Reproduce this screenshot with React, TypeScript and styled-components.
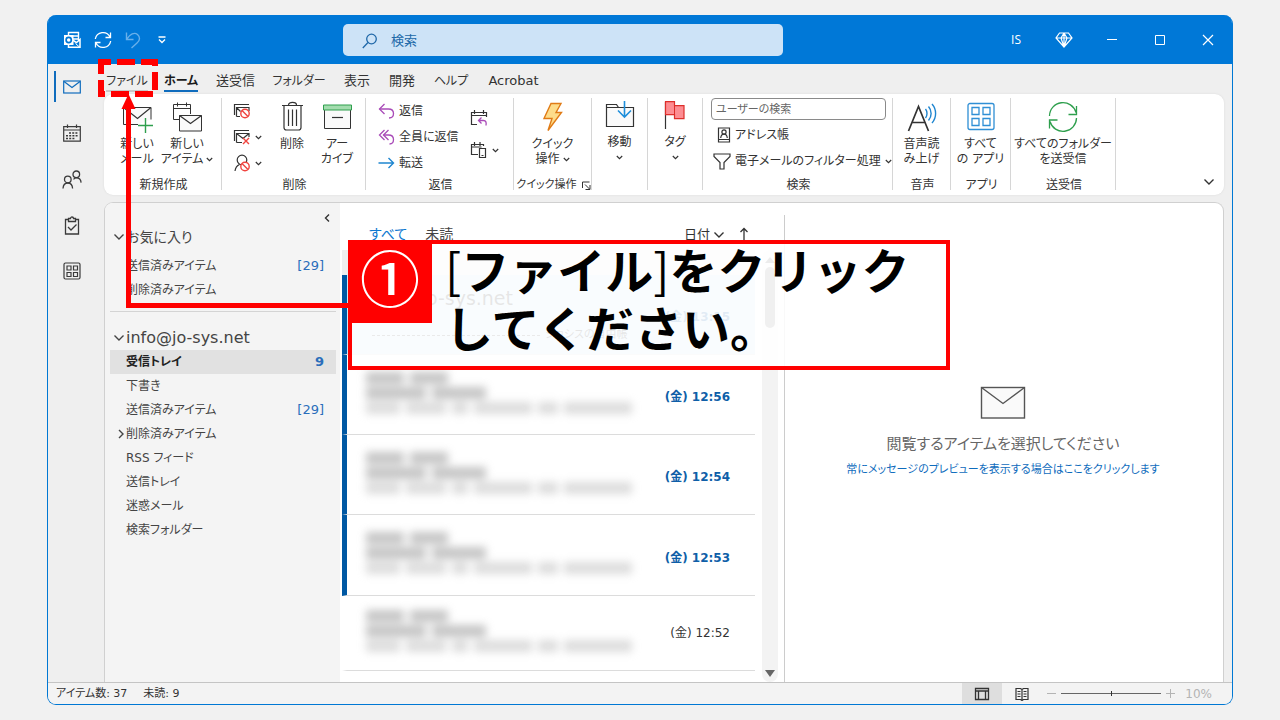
import React from "react";
import styled, { createGlobalStyle } from "styled-components";

const Global = createGlobalStyle`
  * { box-sizing: border-box; }
  body {
    margin: 0;
    background: #f1f1f1;
    color: #333;
    font-family: "DejaVu Sans", "Noto Sans CJK JP", sans-serif;
    font-feature-settings: "palt";
    font-size: 12px;
    line-height: 16px;
  }
  button, input { font: inherit; color: inherit; font-feature-settings: inherit; }
  button { background: none; border: 0; padding: 0; cursor: pointer; white-space: nowrap; }
  a { color: inherit; text-decoration: none; }
  ul { list-style: none; margin: 0; padding: 0; }
  h1, h2, p { margin: 0; font-weight: 400; }
  svg { display: block; flex: none; }
`;

const Page = styled.div`
  display: flex;
  min-height: 100vh;
  padding: 15px 47px;
`;
const Window = styled.div`
  position: relative;
  flex: 1;
  display: flex;
  flex-direction: column;
  border-radius: 9px;
  border: 1px solid #0078d4;
  border-top: 0;
  background: #efefef;
`;

/* Title bar */
const TitleBar = styled.header`
  display: grid;
  grid-template-columns: 295px 440px 1fr;
  align-items: center;
  height: 49px;
  background: #0078d7;
  color: #fff;
  border-radius: 8px 8px 0 0;
`;
const QuickAccess = styled.div`
  display: flex;
  align-items: center;
  gap: 13px;
  padding-left: 15px;
`;
const SearchField = styled.label`
  display: flex;
  align-items: center;
  gap: 13px;
  height: 32px;
  padding: 2px 20px 0 19px;
  border-radius: 5px;
  background: #cde3f7;
  color: #2068a8;
`;
const SearchInput = styled.input`
  flex: 1;
  min-width: 0;
  padding: 0;
  border: 0;
  outline: 0;
  background: none;
  font-size: 13px;
  &::placeholder { color: #2068a8; opacity: 1; }
`;
const WindowControls = styled.div`
  display: flex;
  justify-content: flex-end;
  align-items: center;
`;
const ControlButton = styled.button`
  display: flex;
  justify-content: center;
  align-items: center;
  width: 48px;
  height: 48px;
  font-family: "Open Sans", sans-serif;
`;

/* Body frame */
const Frame = styled.div`
  flex: 1;
  display: flex;
`;
const Rail = styled.nav`
  width: 56px;
  flex: none;
`;
const RailItem = styled.button<{ $active?: boolean }>`
  display: flex;
  align-items: center;
  justify-content: center;
  width: 48px;
  height: 46px;
  position: relative;
  color: ${(p) => (p.$active ? "#0f6cbd" : "#3a3a3a")};
  &::before {
    content: "";
    display: ${(p) => (p.$active ? "block" : "none")};
    position: absolute;
    left: 6px;
    top: 7px;
    width: 2px;
    height: 31px;
    background: #0f6cbd;
  }
`;
const Main = styled.div`
  flex: 1;
  min-width: 0;
  display: flex;
  flex-direction: column;
  padding-right: 8px;
`;
const Tabs = styled.nav`
  display: flex;
  height: 30px;
  margin-left: -5px;
`;
const Tab = styled.button<{ $width: number; $active?: boolean; $kana?: boolean }>`
  display: flex;
  justify-content: center;
  align-items: center;
  width: ${(p) => p.$width}px;
  flex: none;
  font-size: ${(p) => (p.$kana ? 12 : 13)}px;
  font-weight: ${(p) => (p.$active ? 700 : 400)};
  color: ${(p) => (p.$active ? "#1b1b1b" : "#333")};
`;
const TabText = styled.span<{ $line?: string }>`
  line-height: 18px;
  padding-top: 5px;
  border-bottom: 2px solid ${(p) => p.$line || "transparent"};
`;

/* Ribbon */
const Ribbon = styled.section`
  display: flex;
  height: 101px;
  padding: 4px 0 5px;
  background: #fff;
  border-radius: 9px;
  box-shadow: 0 0 2px #d8d8d8;
`;
const Group = styled.div<{ $width: number }>`
  display: flex;
  flex-direction: column;
  width: ${(p) => p.$width}px;
  flex: none;
  border-right: 1px solid #d6d6d6;
`;
const GroupBody = styled.div<{ $pad?: number; $gap?: number }>`
  flex: 1;
  display: flex;
  justify-content: ${(p) => (p.$pad ? "flex-start" : "center")};
  padding-left: ${(p) => p.$pad || 0}px;
  gap: ${(p) => p.$gap || 0}px;
`;
const GroupLabel = styled.div<{ $tight?: boolean }>`
  display: flex;
  justify-content: center;
  align-items: center;
  gap: 5px;
  height: 16px;
  margin-bottom: -3px;
  padding-left: 2px;
  font-size: ${(p) => (p.$tight ? 11 : 12)}px;
  white-space: nowrap;
`;
const BigButton = styled.button<{ $width: number }>`
  display: flex;
  flex-direction: column;
  align-items: center;
  width: ${(p) => p.$width}px;
  height: 70px;
  padding-top: 3px;
  line-height: 15px;
  & > svg { margin-bottom: 4px; }
`;
const BigLine = styled.span`
  display: flex;
  justify-content: center;
  align-items: center;
  gap: 3px;
  min-height: 15px;
`;
const Stack = styled.div<{ $gap?: number; $top?: number }>`
  display: flex;
  flex-direction: column;
  gap: ${(p) => p.$gap || 0}px;
  padding-top: ${(p) => p.$top || 0}px;
`;
const RowButton = styled.button<{ $indent?: number }>`
  display: flex;
  align-items: center;
  gap: 4px;
  height: 26px;
  padding-left: ${(p) => p.$indent || 0}px;
`;
const PeopleSearch = styled.input`
  width: 175px;
  height: 22px;
  margin-bottom: 2px;
  padding: 0 4px;
  border: 1px solid #8a8a8a;
  border-radius: 4px;
  background: #fff;
  font-size: 11px;
  &::placeholder { color: #666; opacity: 1; }
`;
const RibbonEnd = styled.div`
  flex: 1;
  display: flex;
  justify-content: flex-end;
  align-items: flex-end;
  padding: 0 9px 4px 0;
`;

/* Panes */
const Panes = styled.div`
  flex: 1;
  display: flex;
  margin-top: 7px;
  border: 1px solid #d0d0d0;
  border-bottom: 0;
  border-radius: 9px 9px 0 0;
  background: #fff;
  overflow: hidden;
`;
const FolderPane = styled.aside`
  width: 235px;
  flex: none;
  padding: 0 4px 0 5px;
  background: #f4f4f4;
`;
const CollapseRow = styled.div`
  display: flex;
  justify-content: flex-end;
  padding: 8px 5px 0 0;
  height: 22px;
`;
const FolderHeading = styled.h2<{ $size: number }>`
  display: flex;
  align-items: center;
  gap: 1px;
  height: 24px;
  padding-left: 3px;
  font-size: ${(p) => p.$size}px;
  color: #444;
`;
const FolderList = styled.ul``;
const Favorites = styled.div`
  padding-bottom: 9px;
  margin-bottom: 14px;
  border-bottom: 1px solid #d4d4d4;
  & ul { padding-top: 5px; }
`;
const FolderRow = styled.li<{ $active?: boolean }>`
  background: ${(p) => (p.$active ? "#e1e1e1" : "transparent")};
  font-weight: ${(p) => (p.$active ? 700 : 400)};
  color: ${(p) => (p.$active ? "#222" : "#444")};
`;
const FolderLink = styled.a`
  display: grid;
  grid-template-columns: 16px 1fr auto;
  align-items: center;
  height: 24px;
  padding-right: 12px;
  & > svg { justify-self: end; margin-right: 1px; }
`;
const Count = styled.span`
  grid-column: 3;
  font-size: 13px;
  color: #2a6ebb;
`;
const FolderName = styled.span`
  grid-column: 2;
`;

const ListPane = styled.section`
  display: grid;
  grid-template-columns: 413px 16px;
  grid-template-rows: 47px 1fr;
  column-gap: 7px;
  padding: 0 6px 0 2px;
  flex: none;
`;
const ListHeader = styled.div`
  grid-column: 1 / 3;
  display: flex;
  align-items: center;
  padding: 14px 29px 0 27px;
  font-size: 14px;
`;
const FilterButton = styled.button<{ $active?: boolean }>`
  margin-right: 18px;
  color: ${(p) => (p.$active ? "#0f78d0" : "#444")};
`;
const SortButton = styled.button`
  display: flex;
  align-items: center;
  gap: 3px;
  height: 20px;
  padding-top: 3px;
  margin-left: auto;
  font-size: 13px;
`;
const OrderButton = styled.button`
  margin-left: 14px;
`;
const GroupStrip = styled.div`
  height: 25px;
  background: #efefef;
`;
const MessageList = styled.ul``;
const Message = styled.li<{ $unread?: boolean; $selected?: boolean; $height: number }>`
  display: flex;
  justify-content: space-between;
  align-items: center;
  height: ${(p) => p.$height}px;
  padding: 0 25px 0 19px;
  border-left: 5px solid ${(p) => (p.$unread ? "#0058a3" : "transparent")};
  border-bottom: 1px solid #dcdcdc;
  background: ${(p) => (p.$selected ? "#cde6f7" : "transparent")};
`;
const MessageTime = styled.time<{ $unread?: boolean }>`
  padding-top: ${(p) => (p.$unread ? 5 : 0)}px;
  color: ${(p) => (p.$unread ? "#0f5fa8" : "#333")};
  font-weight: ${(p) => (p.$unread ? 700 : 400)};
`;
const SelectedText = styled.div`
  flex: 1;
  color: #333;
`;
const Sender = styled.div`
  font-size: 19px;
  line-height: 24px;
`;
const Subject = styled.div`
  display: flex;
  gap: 5px;
  align-items: center;
  padding: 17px 0 0 6px;
  font-size: 11px;
`;
const SubjectDash = styled.span`
  width: 168px;
  border-top: 1px dashed #555;
`;
const Masked = styled.div`
  display: flex;
  flex-direction: column;
  gap: 3px;
  padding-bottom: 4px;
  filter: blur(4px);
  opacity: 0.5;
`;
const MaskedLine = styled.div`
  display: flex;
  gap: 6px;
`;
const MaskedWord = styled.span<{ $width: number; $light?: boolean }>`
  width: ${(p) => p.$width}px;
  height: 12px;
  background: ${(p) => (p.$light ? "#bbb" : "#8c8c8c")};
`;
const ScrollTrack = styled.div`
  display: flex;
  flex-direction: column;
  align-items: center;
  padding: 7px 0 5px;
  border-radius: 8px;
  background: #f3f3f3;
`;
const ScrollThumb = styled.div`
  width: 10px;
  height: 61px;
  margin: 4px 0 auto;
  border-radius: 5px;
  background: #858585;
`;
const ReadingPane = styled.section`
  flex: 1;
  display: flex;
  flex-direction: column;
  align-items: center;
  justify-content: center;
  margin-top: 12px;
  padding: 0 2px 33px 0;
  border-left: 1px solid #ccc;
`;
const EmptyTitle = styled.p`
  margin-top: 13px;
  font-size: 15px;
  line-height: 22px;
  color: #666;
`;
const EmptyLink = styled.a`
  margin-top: 6px;
  font-size: 11px;
  line-height: 18px;
  color: #0f6cbd;
`;

/* Status bar */
const StatusBar = styled.footer`
  display: flex;
  align-items: center;
  height: 22px;
  padding: 0 20px 0 8px;
  background: #f3f3f3;
  border-top: 1px solid #c4c4c4;
  border-radius: 0 0 8px 8px;
`;
const StatusText = styled.div`
  flex: 1;
  display: flex;
  gap: 16px;
  font-size: 11px;
`;
const ViewButton = styled.button<{ $active?: boolean }>`
  display: flex;
  justify-content: center;
  align-items: center;
  width: 40px;
  height: 21px;
  background: ${(p) => (p.$active ? "#dedede" : "transparent")};
`;
const Zoom = styled.div`
  display: flex;
  align-items: center;
  gap: 5px;
  margin-left: 5px;
  color: #b4b4b4;
`;
const ZoomSlider = styled.input`
  appearance: none;
  width: 100px;
  height: 10px;
  margin: 0;
  background: linear-gradient(#666, #666) center / 100% 1px no-repeat;
  &::-webkit-slider-thumb {
    appearance: none;
    width: 1px;
    height: 5px;
    background: #333;
  }
`;
const ZoomValue = styled.span`
  margin-left: 5px;
`;

/* Instruction overlay */
const TabHighlight = styled.svg`
  position: absolute;
  left: 50px;
  top: 44px;
`;
const Arrow = styled.svg`
  position: absolute;
  left: 70px;
  top: 78px;
`;
const Callout = styled.div`
  position: absolute;
  left: 300px;
  top: 225px;
  display: flex;
  width: 602px;
  height: 130px;
  border: 4px solid #f00;
  background: rgba(255, 255, 255, 0.88);
  color: #000;
`;
const StepBadge = styled.div`
  display: flex;
  justify-content: center;
  width: 84px;
  height: 83px;
  margin: -4px 0 0 -4px;
  background: #f00;
  color: #fff;
  font: 500 60px/72px "Noto Sans CJK JP", sans-serif;
`;
const CalloutText = styled.p`
  margin-top: -5px;
  padding-left: 13px;
  font: 700 48px/58px "Noto Sans CJK JP", sans-serif;
  font-feature-settings: normal;
  white-space: nowrap;
`;
const Bracket = styled.span`
  font-weight: 400;
`;

type IconProps = { w: number; h?: number; children: React.ReactNode; color?: string; sw?: number };
const Icon = ({ w, h = w, children, color = "currentColor", sw = 1 }: IconProps) => (
  <svg width={w} height={h} viewBox={`0 0 ${w} ${h}`} fill="none" stroke={color} strokeWidth={sw} aria-hidden="true">
    {children}
  </svg>
);

const Chevron = () => (
  <Icon w={7} h={5} sw={1.2}><path d="M.8 1l2.700 2.600L6.200 1" /></Icon>
);
const WideChevron = () => (
  <Icon w={12} h={8} sw={1.4}><path d="M1.500 1.500L6 6l4.500-4.500" /></Icon>
);
const Ban = ({ x, y }: { x: number; y: number }) => (
  <g stroke="#f0443f" strokeWidth="1.4">
    <circle cx={x} cy={y} r="4.2" fill="#fff" />
    <path d={`M${x - 3} ${y - 3}l6 6`} />
  </g>
);

const OutlookIcon = () => (
  <Icon w={18}>
    <path d="M5.500 5V1.500H15.500V9M10 5h5M10 8h5" strokeWidth="1.400" />
    <path d="M9.500 9l4 2.600L17 8.500V16.300H5.500V13" strokeWidth="1.500" />
    <path d="M12.500 12.500l4.500 4" />
    <rect x="1" y="4" width="9.500" height="10" fill="#fff" stroke="none" />
    <circle cx="5.700" cy="9" r="2.600" stroke="#0078d7" strokeWidth="1.700" />
  </Icon>
);
const SyncIcon = () => (
  <Icon w={18} sw={1.3}>
    <path d="M1.300 8A7.800 7.800 0 0 1 16 6M16.500 1.500v5h-5M16.700 10A7.800 7.800 0 0 1 2 12M1.500 16.500v-5h5" />
  </Icon>
);
const UndoIcon = () => (
  <Icon w={16} h={18} sw={1.4} color="#69b0ea">
    <path d="M1.500 1.500v7h7M1.800 8.200C5 3 9.500 1 12.500 3.500s2.500 6-.5 8.500l-5.500 5" />
  </Icon>
);
const MailIcon = () => (
  <Icon w={18} h={14} sw={1.2}><rect x=".7" y="1" width="16.600" height="12" /><path d="M1 1.500l8 6 8-6" /></Icon>
);
const CalendarIcon = () => (
  <Icon w={18} h={18} sw={1.2}>
    <path d="M.7 2.700h16.600v14.500H.7zM.7 6h16.600M4.500.5v3.500M13.500.5v3.500" />
    <path d="M6 9h9.500M3 11.800h12.500M3 14.500h9.500" strokeWidth="1.600" strokeDasharray="2 1.200" />
  </Icon>
);
const PeopleIcon = () => (
  <Icon w={20} h={19} sw={1.3}>
    <circle cx="5.800" cy="9.500" r="3.300" /><path d="M1 18.500c.2-3.500 2-5.500 4.800-5.500s4.600 2 4.800 5.500" />
    <circle cx="14.300" cy="4.300" r="3.300" /><path d="M11.500 9.300c.8-1 1.800-1.500 2.800-1.500 2.800 0 4.600 2 4.800 4.800" />
  </Icon>
);
const TaskIcon = () => (
  <Icon w={16} h={19} sw={1.3}>
    <path d="M4.500 3.500H1.500v14.500h13V3.500h-3M4.500 5.500v-3H6.500c0-2 3-2 3 0h2v3z" /><path d="M4 11l3 3 5.500-5.500" />
  </Icon>
);
const AppsIcon = () => (
  <Icon w={18} sw={1.2}>
    <rect x="1" y="1" width="16" height="16" rx="1.500" />
    <path d="M4 4h4v4H4zM10.500 4h4v4h-4zM4 10.500h4v4H4zM10.500 10.500h4v4h-4z" />
  </Icon>
);

const NewMailIcon = () => (
  <Icon w={32}>
    <path d="M17 23.500H2.500V6.500H30v12" fill="#fafafa" /><path d="M2.500 6.500l14 11L30 6.500" strokeWidth="1.200" />
    <path d="M24.500 17v15M17 24.500h15" stroke="#2e9f4d" strokeWidth="1.400" />
  </Icon>
);
const NewItemsIcon = () => (
  <Icon w={32}>
    <path d="M8 18.500H2.500V3.500h17V13M2.500 7.500h17M6.500 1.500v4M15.500 1.500v4" />
    <path d="M8.500 14.500h22v15.500h-22z" fill="#fafafa" /><path d="M8.500 14.500l11 8 11-8" strokeWidth="1.200" />
  </Icon>
);
const IgnoreIcon = () => (
  <Icon w={18} h={16}><path d="M1.500 12V1.500H16M3.500 13.500v-9h12.500V8M3.500 13.500H7M3.500 4.500l4 4" strokeWidth="1.200" /><Ban x={12} y={10.5} /></Icon>
);
const CleanIcon = () => (
  <Icon w={18} h={16}>
    <path d="M1.500 12V1.500H16M3.500 13.500v-9h12.500V8M3.500 13.500H9M3.500 4.500l6.500 5 6-5" strokeWidth="1.200" />
    <path d="M10 9l6 6M16 9l-6 6" stroke="#f0443f" strokeWidth="1.400" />
  </Icon>
);
const JunkIcon = () => (
  <Icon w={18} h={18}><circle cx="9" cy="6" r="4.800" strokeWidth="1.200" /><path d="M2 17c.5-3.500 2-5.500 4.500-6.500" strokeWidth="1.200" /><Ban x={12} y={12.5} /></Icon>
);
const TrashIcon = () => (
  <Icon w={32} sw={1.2}>
    <path d="M6 4.500h21M12.500 4c0-3.500 8-3.500 8 0M8 4.500v22c0 1.500.8 2.500 2.500 2.500h12c1.700 0 2.500-1 2.500-2.500v-22M12.500 8.500v16.500M16.500 8.500v16.500M20.500 8.500v16.500" />
  </Icon>
);
const ArchiveIcon = () => (
  <Icon w={32}>
    <path d="M3.500 8v19.500h26V8" fill="#fafafa" /><path d="M2.500 4h28v5h-28z" fill="#a3dcae" stroke="#2e9f4d" /><path d="M11 16.500h11" strokeWidth="1.200" />
  </Icon>
);
const ReplyIcon = ({ all }: { all?: boolean }) => (
  <Icon w={17} h={16} color="#a94bb8" sw={1.3}>
    <path d="M6.500 1L1.500 6l5 5" />
    {all && <path d="M10.500 1l-5 5 5 5" />}
    <path d={all ? "M5.500 6h5c3.500 0 5 2 5 4.500S14 15 11.500 15" : "M1.500 6h9c3.500 0 5 2 5 4.500S14 15 11 15"} />
  </Icon>
);
const ForwardIcon = () => (
  <Icon w={17} h={16} color="#1f86d0" sw={1.4}><path d="M.5 8h15M10.500 3l5 5-5 5" /></Icon>
);
const MeetingIcon = () => (
  <Icon w={18} h={18}>
    <path d="M7 15.500H1.500v-12h15V8M1.500 6.500h15M4.500 1v4M13.500 1v4" strokeWidth="1.200" />
    <path d="M11.500 8.500l-3 3 3 3M8.500 11.500h5c2.500 0 3 2 2.500 5" stroke="#a94bb8" strokeWidth="1.300" />
  </Icon>
);
const ShareIcon = () => (
  <Icon w={18} h={18}>
    <path d="M8 13.500H1.500v-10h12V5M1.500 6h10M4.500 1v4M10 1v4M9.500 7.500h6v9h-6zM11.500 14.500h2" strokeWidth="1.200" />
  </Icon>
);
const BoltIcon = () => (
  <Icon w={32}><path d="M14 2.500h10l-5 9h5.500L11 29.500l4-12H7z" fill="#fddc8a" stroke="#e07b16" strokeWidth="1.400" /></Icon>
);
const MoveIcon = () => (
  <Icon w={32} h={30}>
    <path d="M2.500 25.500v-22h10l2 3h15v19z" fill="#fafafa" strokeWidth="1.200" /><path d="M2.500 6.500h12" />
    <path d="M20.500-2v17M14 9.500l6.500 6.500 6.500-6.500" stroke="#1f8fdb" strokeWidth="1.600" />
  </Icon>
);
const FlagIcon = () => (
  <Icon w={32} h={30}>
    <path d="M6.500 1v27" strokeWidth="1.200" /><path d="M6.500 .7h9v4h9.500v13h-9.500v-4h-9z" fill="#fd8d92" stroke="#dd2f2b" strokeWidth="1.200" />
    <path d="M15.500 4.700v9" stroke="#dd2f2b" />
  </Icon>
);
const AddressIcon = () => (
  <Icon w={14} h={16} sw={1.2}>
    <path d="M1.500 1h11v14h-11zM1.500 12.500h11" /><circle cx="7" cy="5" r="2.100" /><path d="M3.700 11c.3-2.500 1.500-3.800 3.300-3.800s3 1.300 3.300 3.800" />
  </Icon>
);
const FilterIcon = () => (
  <Icon w={18} h={17} sw={1.2}><path d="M1 1h16v2.500l-6 6V16H7V9.500L1 3.500z" /></Icon>
);
const SpeakIcon = () => (
  <Icon w={32}>
    <path d="M2.500 30L12.500 5.500l10 24.500M6.500 21.500h12" strokeWidth="1.700" />
    <path d="M19.500 8c2 2.500 2 6.500 0 9M22.500 5.500c3.500 4 3.500 10 0 14M26 3c4.800 5.500 4.800 13.500 0 19" stroke="#1f86d0" strokeWidth="1.400" />
  </Icon>
);
const AllAppsIcon = () => (
  <Icon w={32} color="#2f8fd5" sw={1.3}>
    <rect x="3" y="2.500" width="26" height="26" rx="2" />
    <path d="M7 6.500h7v7H7zM18 6.500h7v7h-7zM7 17.500h7v7H7zM18 17.500h7v7h-7z" />
  </Icon>
);
const SyncAllIcon = () => (
  <Icon w={32} color="#2e9f4d" sw={1.3}>
    <path d="M2.500 15A13.500 13.500 0 0 1 29 11.500M29.500 5v8.500h-8M29.500 17A13.500 13.500 0 0 1 3 20.500M2.500 27.500V19h8" />
  </Icon>
);

const tabs = [
  { name: "ファイル", width: 56, line: "#c8c8c8", kana: true },
  { name: "ホーム", width: 52, line: "#0f6cbd", active: true, kana: true },
  { name: "送受信", width: 57 },
  { name: "フォルダー", width: 70, kana: true },
  { name: "表示", width: 46 },
  { name: "開発", width: 44 },
  { name: "ヘルプ", width: 54, kana: true },
  { name: "Acrobat", width: 71 },
];

const folders = [
  { name: "受信トレイ", count: "9", active: true },
  { name: "下書き" },
  { name: "送信済みアイテム", count: "[29]" },
  { name: "削除済みアイテム", expandable: true },
  { name: "RSS フィード" },
  { name: "送信トレイ" },
  { name: "迷惑メール" },
  { name: "検索フォルダー" },
];
const messages = [
  { time: "12:56", unread: true, height: 80 },
  { time: "12:54", unread: true, height: 80 },
  { time: "12:53", unread: true, height: 81 },
  { time: "12:52", unread: false, height: 75 },
];
const maskedLines = [[38, 38], [60, 54], [34, 40, 16, 58, 20, 68]];

type Big = { icon: React.ReactNode; lines: string[]; menu?: boolean; width: number };
const Large = ({ icon, lines, menu, width }: Big) => (
  <BigButton $width={width}>
    {icon}
    {lines.map((line, i) => (
      <BigLine key={i}>
        {line}
        {menu && i === lines.length - 1 && <Chevron />}
      </BigLine>
    ))}
  </BigButton>
);

type Folder = { name: string; count?: string; active?: boolean; expandable?: boolean };
const FolderItem = ({ name, count, active, expandable }: Folder) => (
  <FolderRow $active={active}>
    <FolderLink href="#">
      {expandable && <Icon w={8} h={10} sw={1.4}><path d="M2 1l4 4-4 4" /></Icon>}
      <FolderName>{name}</FolderName>
      {count && <Count>{count}</Count>}
    </FolderLink>
  </FolderRow>
);

export default function App() {
  return (
    <Page>
      <Global />
      <Window>
        <TitleBar>
          <QuickAccess>
            <button aria-label="Outlook"><OutlookIcon /></button>
            <button aria-label="すべてのフォルダーを送受信"><SyncIcon /></button>
            <button aria-label="元に戻す"><UndoIcon /></button>
            <button aria-label="クイック アクセスのカスタマイズ">
              <Icon w={16} h={8} sw={1.3}><path d="M4.500 1h7M5 3.500l3 3 3-3" /></Icon>
            </button>
          </QuickAccess>
          <SearchField>
            <Icon w={16} sw={1.3}><circle cx="9.500" cy="6" r="4.800" /><path d="M6 9.500L.8 15" /></Icon>
            <SearchInput placeholder="検索" aria-label="検索" />
          </SearchField>
          <WindowControls>
            <ControlButton>IS</ControlButton>
            <ControlButton aria-label="Premium">
              <Icon w={18} h={16} sw={1.2}>
                <path d="M4.500 1h9L17 6l-8 9L1 6zM1 6h16M6 6l3 9 3-9M9 1L6 6M9 1l3 5M9 1v14" />
              </Icon>
            </ControlButton>
            <ControlButton aria-label="最小化"><Icon w={12}><path d="M1 5.500h10" /></Icon></ControlButton>
            <ControlButton aria-label="最大化"><Icon w={12}><path d="M1.500 1.500h9v9h-9z" /></Icon></ControlButton>
            <ControlButton aria-label="閉じる"><Icon w={12} sw={1.2}><path d="M1 1l10 10M11 1L1 11" /></Icon></ControlButton>
          </WindowControls>
        </TitleBar>

        <Frame>
          <Rail>
            <RailItem $active aria-label="メール"><MailIcon /></RailItem>
            <RailItem aria-label="予定表"><CalendarIcon /></RailItem>
            <RailItem aria-label="連絡先"><PeopleIcon /></RailItem>
            <RailItem aria-label="タスク"><TaskIcon /></RailItem>
            <RailItem aria-label="その他のアプリ"><AppsIcon /></RailItem>
          </Rail>

          <Main>
            <Tabs>
              {tabs.map((t) => (
                <Tab key={t.name} $width={t.width} $active={t.active} $kana={t.kana}>
                  <TabText $line={t.line}>{t.name}</TabText>
                </Tab>
              ))}
            </Tabs>

            <Ribbon>
              <Group $width={118}>
                <GroupBody $pad={10}>
                  <Large icon={<NewMailIcon />} lines={["新しい", "メール"]} width={46} />
                  <Large icon={<NewItemsIcon />} lines={["新しい", "アイテム"]} menu width={54} />
                </GroupBody>
                <GroupLabel>新規作成</GroupLabel>
              </Group>
              <Group $width={144}>
                <GroupBody $pad={11}>
                  <Stack>
                    <RowButton aria-label="無視"><IgnoreIcon /></RowButton>
                    <RowButton aria-label="クリーンアップ"><CleanIcon /><Chevron /></RowButton>
                    <RowButton aria-label="迷惑メール"><JunkIcon /><Chevron /></RowButton>
                  </Stack>
                  <Large icon={<TrashIcon />} lines={["削除"]} width={60} />
                  <Large icon={<ArchiveIcon />} lines={["アー", "カイブ"]} width={30} />
                </GroupBody>
                <GroupLabel>削除</GroupLabel>
              </Group>
              <Group $width={148}>
                <GroupBody $pad={12} $gap={11}>
                  <Stack>
                    <RowButton><ReplyIcon />返信</RowButton>
                    <RowButton><ReplyIcon all />全員に返信</RowButton>
                    <RowButton><ForwardIcon />転送</RowButton>
                  </Stack>
                  <Stack $top={7} $gap={6}>
                    <RowButton aria-label="会議"><MeetingIcon /></RowButton>
                    <RowButton aria-label="その他"><ShareIcon /><Chevron /></RowButton>
                  </Stack>
                </GroupBody>
                <GroupLabel>返信</GroupLabel>
              </Group>
              <Group $width={78}>
                <GroupBody>
                  <Large icon={<BoltIcon />} lines={["クイック", "操作"]} menu width={60} />
                </GroupBody>
                <GroupLabel $tight>
                  クイック操作
                  <Icon w={9}><path d="M.5 7V1h7M3 3.500l4.500 4.500M8 4v4.500H3.500" /></Icon>
                </GroupLabel>
              </Group>
              <Group $width={56}>
                <GroupBody>
                  <Large icon={<MoveIcon />} lines={["移動", ""]} menu width={50} />
                </GroupBody>
              </Group>
              <Group $width={55}>
                <GroupBody>
                  <Large icon={<FlagIcon />} lines={["タグ", ""]} menu width={50} />
                </GroupBody>
              </Group>
              <Group $width={190}>
                <GroupBody $pad={8}>
                  <Stack>
                    <PeopleSearch placeholder="ユーザーの検索" aria-label="ユーザーの検索" />
                    <RowButton $indent={6}><AddressIcon />アドレス帳</RowButton>
                    <RowButton $indent={2}><FilterIcon />電子メールのフィルター処理<Chevron /></RowButton>
                  </Stack>
                </GroupBody>
                <GroupLabel>検索</GroupLabel>
              </Group>
              <Group $width={58}>
                <GroupBody><Large icon={<SpeakIcon />} lines={["音声読", "み上げ"]} width={50} /></GroupBody>
                <GroupLabel>音声</GroupLabel>
              </Group>
              <Group $width={60}>
                <GroupBody><Large icon={<AllAppsIcon />} lines={["すべて", "の アプリ"]} width={54} /></GroupBody>
                <GroupLabel>アプリ</GroupLabel>
              </Group>
              <Group $width={105}>
                <GroupBody><Large icon={<SyncAllIcon />} lines={["すべてのフォルダー", "を送受信"]} width={100} /></GroupBody>
                <GroupLabel>送受信</GroupLabel>
              </Group>
              <RibbonEnd>
                <button aria-label="リボンを折りたたむ"><WideChevron /></button>
              </RibbonEnd>
            </Ribbon>

            <Panes>
              <FolderPane>
                <CollapseRow>
                  <button aria-label="フォルダー ウィンドウの最小化">
                    <Icon w={8} h={10} sw={1.4}><path d="M6 1.500L2.500 5 6 8.500" /></Icon>
                  </button>
                </CollapseRow>
                <Favorites>
                  <FolderHeading $size={14}><WideChevron />お気に入り</FolderHeading>
                  <FolderList>
                    <FolderItem name="送信済みアイテム" count="[29]" />
                    <FolderItem name="削除済みアイテム" />
                  </FolderList>
                </Favorites>
                <FolderHeading $size={16}><WideChevron />info@jo-sys.net</FolderHeading>
                <FolderList>
                  {folders.map((f) => <FolderItem key={f.name} {...f} />)}
                </FolderList>
              </FolderPane>

              <ListPane>
                <ListHeader>
                  <FilterButton $active>すべて</FilterButton>
                  <FilterButton>未読</FilterButton>
                  <SortButton>日付 <WideChevron /></SortButton>
                  <OrderButton aria-label="並べ替え順序">
                    <Icon w={10} h={13} sw={1.3}><path d="M5 13V1.500M1.500 5L5 1.500 8.500 5" /></Icon>
                  </OrderButton>
                </ListHeader>
                <MessageList>
                  <li><GroupStrip /></li>
                  <Message $unread $selected $height={80}>
                    <SelectedText>
                      <Sender>info@jo-sys.net</Sender>
                      <Subject><SubjectDash />ジョシスの自由帳</Subject>
                    </SelectedText>
                    <MessageTime $unread>(金) 13:15</MessageTime>
                  </Message>
                  {messages.map((m) => (
                    <Message key={m.time} $unread={m.unread} $height={m.height}>
                      <Masked aria-hidden="true">
                        {maskedLines.map((words, i) => (
                          <MaskedLine key={i}>
                            {words.map((w, j) => <MaskedWord key={j} $width={w} $light={i === 2} />)}
                          </MaskedLine>
                        ))}
                      </Masked>
                      <MessageTime $unread={m.unread}>(金) {m.time}</MessageTime>
                    </Message>
                  ))}
                </MessageList>
                <ScrollTrack>
                  <svg width="10" height="6" viewBox="0 0 10 6"><path d="M0 6l5-6 5 6z" fill="#666" /></svg>
                  <ScrollThumb />
                  <svg width="10" height="7" viewBox="0 0 10 7"><path d="M0 0h10L5 7z" fill="#666" /></svg>
                </ScrollTrack>
              </ListPane>

              <ReadingPane>
                <Icon w={46} h={34} sw={1.4} color="#555">
                  <rect x="1.500" y="1.500" width="43" height="30.500" fill="#fafafa" /><path d="M1.500 1.500L23 17.500l21.500-16" />
                </Icon>
                <EmptyTitle>閲覧するアイテムを選択してください</EmptyTitle>
                <EmptyLink href="#">常にメッセージのプレビューを表示する場合はここをクリックします</EmptyLink>
              </ReadingPane>
            </Panes>
          </Main>
        </Frame>

        <StatusBar>
          <StatusText>
            <span>アイテム数: 37</span>
            <span>未読: 9</span>
          </StatusText>
          <ViewButton $active aria-label="標準">
            <Icon w={16} h={14} sw={1.3}><path d="M1.500 1.500h13v11h-13zM1.500 4h13M4.500 4v8.500M11.500 4v8.500" /></Icon>
          </ViewButton>
          <ViewButton aria-label="閲覧">
            <Icon w={14} h={14} sw={1.2}>
              <path d="M1 1.500h4.500L7 2.500l1.500-1H13v11H8.500L7 13.500l-1.500-1H1zM7 2.500v11M2.500 4.500h3M2.500 7h3M2.500 9.500h3M8.500 4.500h3M8.500 7h3M8.500 9.500h3" />
            </Icon>
          </ViewButton>
          <Zoom>
            <button aria-label="縮小"><Icon w={9}><path d="M0 4.500h9" /></Icon></button>
            <ZoomSlider type="range" min={10} max={190} defaultValue={100} aria-label="ズーム" />
            <button aria-label="拡大"><Icon w={9}><path d="M0 4.500h9M4.500 0v9" /></Icon></button>
            <ZoomValue>10%</ZoomValue>
          </Zoom>
        </StatusBar>

        <TabHighlight width="60" height="38" viewBox="0 0 60 38" aria-hidden="true">
          <rect x="3" y="3" width="54" height="32" fill="none" stroke="#f00" strokeWidth="6" strokeDasharray="18 6" strokeDashoffset="8" />
        </TabHighlight>
        <Arrow width="234" height="216" viewBox="0 0 234 216" aria-hidden="true">
          <path d="M232 212.500H10.500V12" fill="none" stroke="#f00" strokeWidth="5" />
          <path d="M10.500 1l7 15h-14z" fill="#f00" />
        </Arrow>
        <Callout>
          <StepBadge>①</StepBadge>
          <CalloutText>
            <Bracket>[</Bracket>ファイル<Bracket>]</Bracket>をクリック
            <br />
            してください。
          </CalloutText>
        </Callout>
      </Window>
    </Page>
  );
}
